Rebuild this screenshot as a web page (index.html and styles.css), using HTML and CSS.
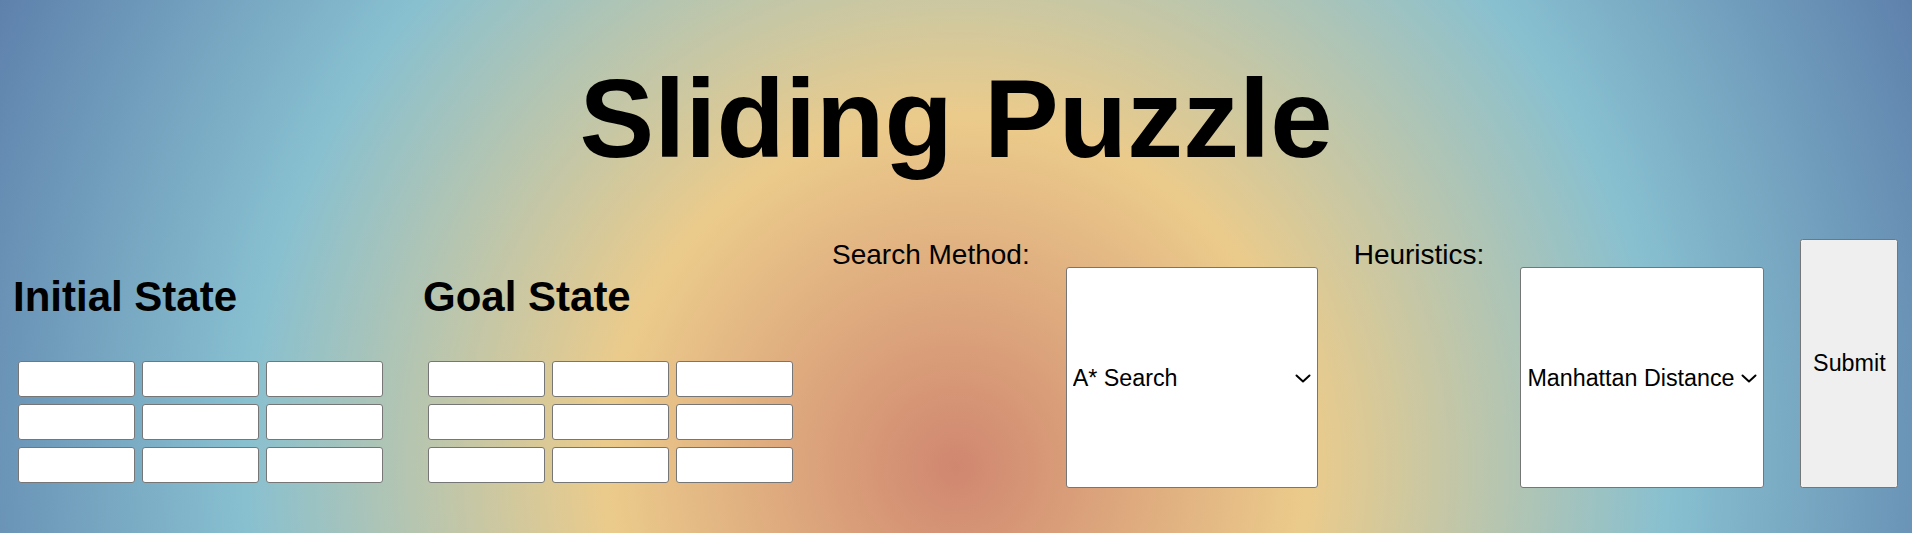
FILE: index.html
```html
<!DOCTYPE html>
<html lang="en">
<head>
<meta charset="utf-8">
<title>Sliding Puzzle</title>
<link rel="stylesheet" href="styles.css">
</head>
<body>
<h1 class="title">Sliding Puzzle</h1>
<form class="controls">
  <section class="state">
    <h2 class="state-title">Initial State</h2>
    <div class="tiles">
      <input class="tile" type="text"><input class="tile" type="text"><input class="tile" type="text">
      <input class="tile" type="text"><input class="tile" type="text"><input class="tile" type="text">
      <input class="tile" type="text"><input class="tile" type="text"><input class="tile" type="text">
    </div>
  </section>
  <section class="state">
    <h2 class="state-title">Goal State</h2>
    <div class="tiles">
      <input class="tile" type="text"><input class="tile" type="text"><input class="tile" type="text">
      <input class="tile" type="text"><input class="tile" type="text"><input class="tile" type="text">
      <input class="tile" type="text"><input class="tile" type="text"><input class="tile" type="text">
    </div>
  </section>
  <label class="field-label" for="search">Search Method:</label>
  <div class="picker-wrap">
    <select id="search" class="picker picker-search">
      <option>A* Search</option>
      <option>Breadth First Search</option>
      <option>Depth First Search</option>
    </select>
    <svg class="chevron" width="16" height="9" viewBox="0 0 16 9" aria-hidden="true"><polyline points="1.5,1.5 8,7.5 14.5,1.5" fill="none" stroke="#000" stroke-width="2" stroke-linecap="round" stroke-linejoin="round"/></svg>
  </div>
  <label class="field-label" for="heuristic">Heuristics:</label>
  <div class="picker-wrap">
    <select id="heuristic" class="picker picker-heuristic">
      <option>Manhattan Distance</option>
      <option>Misplaced Tiles</option>
    </select>
    <svg class="chevron" width="16" height="9" viewBox="0 0 16 9" aria-hidden="true"><polyline points="1.5,1.5 8,7.5 14.5,1.5" fill="none" stroke="#000" stroke-width="2" stroke-linecap="round" stroke-linejoin="round"/></svg>
  </div>
  <button class="submit" type="button">Submit</button>
</form>
</body>
</html>
```
FILE: styles.css
```css
html {
  min-height: 100%;
  background: radial-gradient(circle 1063px at 50% 467px, #d08770 0%, #ebcb8b 33%, #88c0d0 67%, #5e81ac 100%);
}

body {
  margin: 0;
  font-family: "Liberation Sans", Arial, sans-serif;
  color: #000;
}

.title {
  margin: 54px 0 56px;
  font-size: 112px;
  font-weight: 700;
  text-align: center;
  line-height: normal;
}

.controls {
  display: flex;
  align-items: flex-start;
  gap: 36px;
  padding: 0 12px;
}

.state {
  display: flex;
  flex-direction: column;
}

.state-title {
  margin: 34px 0 40px 1px;
  font-size: 42px;
  font-weight: 700;
  line-height: normal;
}

.tiles {
  display: grid;
  grid-template-columns: repeat(3, 117px);
  gap: 7px;
  padding: 0 3px 0 6px;
}

.tile {
  box-sizing: border-box;
  width: 117px;
  height: 36px;
  margin: 0;
  border: 1px solid #767676;
  border-radius: 3px;
  background: #fff;
  font-family: "Liberation Sans", Arial, sans-serif;
  font-size: 16px;
}

.field-label {
  font-size: 28px;
  line-height: normal;
  white-space: nowrap;
}

.picker-wrap {
  position: relative;
  display: flex;
  margin-top: 28px;
}

.picker {
  appearance: none;
  -webkit-appearance: none;
  box-sizing: border-box;
  height: 221px;
  margin: 0;
  padding: 0 18px 0 6px;
  border: 1px solid #767676;
  border-radius: 3px;
  background: #fff;
  color: #000;
  font-family: "Liberation Sans", Arial, sans-serif;
  font-size: 23.3px;
}

.picker-search {
  width: 252px;
}

.picker-heuristic {
  width: 244px;
}

.chevron {
  position: absolute;
  right: 7px;
  top: calc(50% - 3.5px);
  pointer-events: none;
}

.submit {
  box-sizing: border-box;
  width: 98px;
  height: 249px;
  margin: 0;
  font-family: "Liberation Sans", Arial, sans-serif;
  font-size: 23.3px;
}
```
